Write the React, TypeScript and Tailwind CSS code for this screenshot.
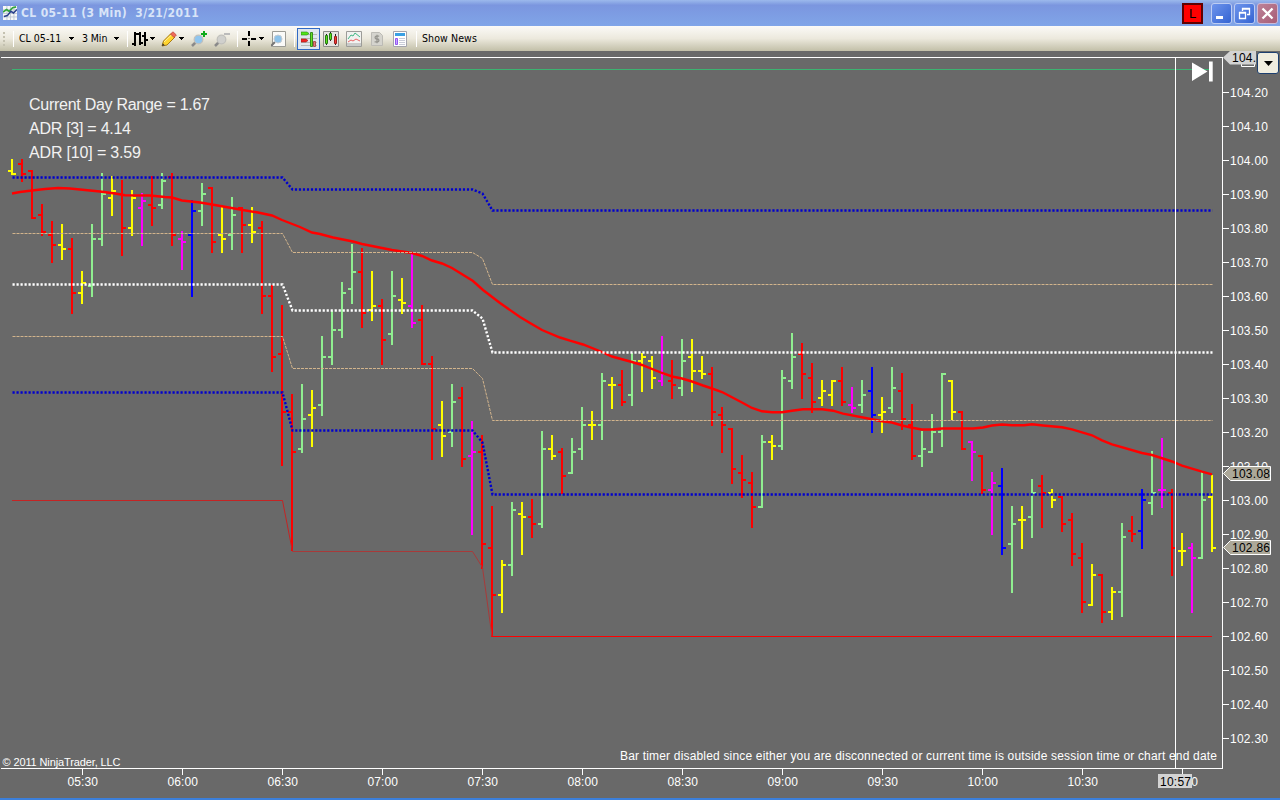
import type { ReactNode } from 'react';
import clsx from 'clsx';

// [kind, high, low, open, close] - values are y positions on the price panel
type Bar = [string, number, number, number, number];

const COLORS: Record<string, string> = {
  R: '#ff0000',
  G: '#90ee90',
  Y: '#ffff00',
  M: '#ff00ff',
  B: '#0000ff',
};

const bars: Bar[] = [
  ['Y', 159, 175, 171, 174],
  ['R', 159, 182, 164, 174],
  ['R', 170, 219, 171, 218],
  ['R', 204, 236, 215, 232],
  ['R', 221, 263, 235, 245],
  ['Y', 224, 260, 245, 249],
  ['R', 238, 314, 249, 293],
  ['Y', 271, 304, 293, 283],
  ['G', 224, 297, 286, 239],
  ['G', 173, 246, 239, 194],
  ['Y', 176, 216, 198, 191],
  ['R', 180, 256, 194, 228],
  ['Y', 190, 236, 228, 198],
  ['M', 193, 246, 208, 201],
  ['R', 176, 226, 205, 208],
  ['G', 173, 209, 205, 181],
  ['R', 173, 246, 177, 235],
  ['M', 231, 270, 239, 242],
  ['B', 200, 297, 235, 211],
  ['G', 183, 226, 211, 194],
  ['R', 187, 253, 188, 242],
  ['Y', 207, 253, 235, 239],
  ['G', 197, 250, 235, 215],
  ['R', 207, 253, 208, 225],
  ['Y', 207, 243, 225, 232],
  ['R', 221, 314, 228, 296],
  ['R', 285, 372, 296, 357],
  ['R', 305, 466, 354, 412],
  ['R', 394, 551, 412, 452],
  ['G', 384, 453, 449, 419],
  ['Y', 390, 447, 415, 408],
  ['G', 336, 416, 405, 357],
  ['G', 311, 365, 357, 330],
  ['G', 282, 338, 330, 293],
  ['G', 244, 304, 289, 272],
  ['R', 248, 328, 272, 313],
  ['Y', 271, 321, 310, 306],
  ['R', 299, 365, 306, 340],
  ['G', 271, 345, 334, 296],
  ['Y', 278, 314, 300, 303],
  ['M', 253, 328, 306, 323],
  ['R', 305, 365, 320, 364],
  ['R', 356, 460, 364, 429],
  ['Y', 401, 457, 425, 436],
  ['G', 384, 447, 432, 402],
  ['R', 387, 467, 398, 459],
  ['M', 421, 535, 456, 452],
  ['R', 435, 569, 452, 544],
  ['R', 506, 637, 548, 595],
  ['Y', 560, 613, 595, 565],
  ['G', 502, 576, 565, 510],
  ['Y', 502, 555, 514, 517],
  ['R', 499, 538, 517, 524],
  ['G', 431, 528, 524, 449],
  ['Y', 435, 460, 449, 456],
  ['R', 448, 494, 452, 476],
  ['G', 438, 474, 473, 452],
  ['G', 407, 460, 449, 425],
  ['Y', 411, 440, 425, 425],
  ['G', 373, 440, 425, 381],
  ['Y', 377, 409, 385, 385],
  ['R', 370, 406, 385, 402],
  ['G', 353, 406, 395, 361],
  ['Y', 353, 392, 361, 357],
  ['Y', 356, 389, 361, 378],
  ['M', 336, 386, 381, 374],
  ['R', 360, 399, 381, 385],
  ['G', 339, 396, 388, 361],
  ['Y', 339, 392, 357, 371],
  ['Y', 356, 379, 371, 374],
  ['R', 367, 426, 374, 412],
  ['R', 407, 453, 415, 425],
  ['R', 428, 484, 429, 469],
  ['R', 455, 498, 473, 480],
  ['R', 472, 528, 483, 507],
  ['G', 435, 508, 507, 442],
  ['Y', 435, 460, 442, 446],
  ['G', 370, 450, 446, 378],
  ['G', 333, 389, 381, 357],
  ['R', 343, 399, 354, 374],
  ['R', 363, 413, 378, 402],
  ['Y', 380, 406, 398, 391],
  ['Y', 380, 406, 395, 381],
  ['R', 367, 406, 381, 402],
  ['M', 387, 413, 405, 408],
  ['G', 380, 413, 405, 395],
  ['B', 367, 433, 391, 415],
  ['Y', 397, 433, 415, 412],
  ['G', 367, 413, 408, 388],
  ['R', 373, 430, 391, 419],
  ['R', 404, 460, 425, 456],
  ['G', 431, 467, 456, 449],
  ['G', 414, 453, 452, 432],
  ['G', 373, 447, 432, 374],
  ['Y', 380, 420, 381, 412],
  ['R', 411, 450, 412, 449],
  ['M', 441, 481, 442, 452],
  ['R', 455, 494, 456, 490],
  ['M', 472, 535, 490, 483],
  ['B', 468, 555, 486, 548],
  ['G', 506, 593, 544, 524],
  ['Y', 506, 549, 520, 520],
  ['G', 479, 538, 517, 493],
  ['R', 475, 528, 486, 493],
  ['Y', 489, 508, 493, 500],
  ['R', 496, 532, 497, 524],
  ['R', 513, 566, 520, 554],
  ['R', 543, 613, 558, 602],
  ['Y', 564, 606, 605, 575],
  ['R', 574, 623, 575, 612],
  ['Y', 587, 620, 612, 592],
  ['G', 523, 617, 592, 537],
  ['R', 516, 542, 531, 534],
  ['B', 489, 549, 531, 500],
  ['G', 451, 515, 503, 493],
  ['M', 438, 508, 490, 490],
  ['R', 489, 576, 493, 548],
  ['Y', 533, 566, 551, 551],
  ['M', 543, 613, 548, 558],
  ['G', 472, 559, 558, 500],
  ['Y', 475, 552, 497, 548],
];

const movingAverage =
  '12,193.5 20,192 32,190.5 45,189 58,188 70,188.5 85,190 100,191.5 115,193.5 125,195.3 150,195.5 165,197 172,197.5 182,200.5 200,202.5 212,204.5 240,209.5 258,212.5 272,215.5 282,220 300,227 312,232.5 320,234 333,237.5 353,241.5 362,244 392,250 412,253 422,256 432,260.5 442,263.5 452,268 473,281 483,290 500,303 520,317 530,323 542,330 560,337.5 570,340.7 583,344.5 602,352 612,356.5 632,362 642,365 662,373 672,376.5 682,378.5 692,381.5 703,385.5 712,388.5 722,392 742,402.5 752,408 762,411.3 772,412.3 782,412.3 792,410.7 803,409.3 822,409.3 833,410.7 843,413.7 872,419.3 882,421.3 892,422.5 902,425.5 912,427.7 922,429.5 932,429.5 942,428.5 973,428.5 983,427.5 992,425.5 1002,424.5 1012,425.3 1024,425.3 1032,424.3 1043,425.5 1062,427.3 1072,429.3 1092,435.3 1102,440.3 1112,444.3 1142,453 1152,455 1172,461.5 1182,465.7 1202,471.7 1212,474.3';

// each level steps down at 06:30 and again around 07:30
const level = (a: number, b: number, c: number, d: number) =>
  `12.5,${a} 282.5,${a} 292.5,${b} 472.5,${b} 482.5,${c} 492.5,${d} 1212.5,${d}`;

const times = ['05:30', '06:00', '06:30', '07:00', '07:30', '08:00', '08:30', '09:00', '09:30', '10:00', '10:30', '11:00'];
const prices = Array.from({ length: 20 }, (_, i) => (104.2 - i * 0.1).toFixed(2));

const PriceTag = ({ y, value }: { y: number; value: string }) => (
  <g>
    <polygon
      points={`1223.5,${y} 1230.5,${y - 7} 1270.5,${y - 7} 1270.5,${y + 7} 1230.5,${y + 7}`}
      fill="#aca899"
      stroke="#fff"
    />
    <text x="1232" y={y + 4.5} textLength="38" fill="#000">
      {value}
    </text>
  </g>
);

const Chart = () => (
  <svg
    className="block h-[747px] w-full bg-[#696969] font-['Liberation_Sans',Arial,sans-serif] text-[12px]"
    viewBox="0 51 1280 747"
    fill="#fff"
  >
    <path d="M12 69.5H1212" stroke="#3cb371" shapeRendering="crispEdges" />

    {bars.map(([kind, high, low, open, close], i) => {
      const x = 12 + i * 10;
      return (
        <g key={i} fill={COLORS[kind]} shapeRendering="crispEdges">
          <rect x={x - 1} y={high} width="2" height={low - high} />
          <rect x={x - 4} y={open - 1} width="3" height="2" />
          <rect x={x + 1} y={close - 1} width="3" height="2" />
        </g>
      );
    })}

    {/* moving average and day range levels */}
    <g fill="none">
      <polyline points={movingAverage} stroke="#ff0000" strokeWidth="2.4" />
      <polyline points={level(233.5, 252.5, 258.5, 284.5)} stroke="#d2b48c" strokeDasharray="3 1" />
      <polyline points={level(336.5, 368.5, 378.5, 420.5)} stroke="#d2b48c" strokeDasharray="3 1" />
      <polyline points={level(177.5, 189.5, 193.5, 210.5)} stroke="#0000cd" strokeWidth="2.4" strokeDasharray="2.2 1.8" />
      <polyline points={level(392.5, 430.5, 442.5, 494.5)} stroke="#0000cd" strokeWidth="2.4" strokeDasharray="2.2 1.8" />
      <polyline points={level(284.5, 310.5, 318.5, 352.5)} stroke="#ffffff" strokeWidth="2.4" strokeDasharray="2.2 1.8" />
      <polyline points="12,500.5 282.5,500.5 292.5,551.5" stroke="#c42424" />
      <polyline points="292.5,551.5 472.5,551.5 482.5,567.5 492,636.5" stroke="#a83a3a" />
      <path d="M492 636.5H1212" stroke="#f00" />
    </g>

    {/* axes and crosshair */}
    <g stroke="#fff" shapeRendering="crispEdges">
      <path d="M1 57.5H1223M1222.5 57V768M1 768.5H1223M1175.5 57V768" fill="none" />
      {prices.map((p, i) => (
        <path key={p} d={`M1223 ${92.5 + i * 34}h6`} />
      ))}
      {times.map((t, i) => (
        <path key={t} d={`M${82.5 + i * 100} 769v6`} />
      ))}
    </g>

    {prices.map((p, i) => (
      <text key={p} x="1230" y={97 + i * 34} textLength="38">
        {p}
      </text>
    ))}
    {times.map((t, i) => (
      <text key={t} x={67.5 + i * 100} y="786" textLength="30.5">
        {t}
      </text>
    ))}

    <PriceTag y={473.5} value="103.08" />
    <PriceTag y={547.5} value="102.86" />

    {/* crosshair markers */}
    <path d="M1241.5 64V66.5H1254.5V64" fill="none" stroke="#fff" />
    <polygon points="1223,57.5 1230,51 1256,51 1256,64.5 1230,64.5" fill="#d3d3d3" />
    <text x="1232" y="62" textLength="24" fill="#000">
      104.
    </text>
    <rect x="1158" y="774" width="34" height="14" fill="#d3d3d3" />
    <text x="1160" y="786" textLength="31" fill="#000">
      10:57
    </text>

    <path d="M1192 62.5L1207.5 71.5L1192 81ZM1209 61.5h3.7v20h-3.7z" />

    <g fontSize="16" fill="#f2f2f2">
      <text x="29" y="110" textLength="181">
        Current Day Range = 1.67
      </text>
      <text x="29" y="134" textLength="102">
        ADR [3] = 4.14
      </text>
      <text x="29" y="158" textLength="112">
        ADR [10] = 3.59
      </text>
    </g>
    <text x="620" y="760" textLength="597">
      Bar timer disabled since either you are disconnected or current time is outside session time or chart end date
    </text>
    <text x="2.5" y="766" fontSize="11" textLength="118">
      © 2011 NinjaTrader, LLC
    </text>
  </svg>
);

const Caret = ({ className }: { className?: string }) => (
  <svg className={clsx('h-[3px] w-[5px] shrink-0', className)} viewBox="0 0 5 3" shapeRendering="crispEdges">
    <path d="M0 0h5v1H0zM1 1h3v1H1zM2 2h1v1H2z" />
  </svg>
);

const Separator = ({ className }: { className?: string }) => (
  <div className={clsx('h-4 w-px shrink-0 border-l border-white', className)} />
);

const Icon = ({ className, children }: { className?: string; children: ReactNode }) => (
  <svg className={clsx('size-4 shrink-0', className)} viewBox="0 0 16 16" fill="none">
    {children}
  </svg>
);

const Lens = ({ color }: { color: string }) => (
  <>
    <path d="M1 15l4-4" stroke="#8a8a8a" strokeWidth="2.5" />
    <circle cx="7.5" cy="8.5" r="4.3" fill={color} stroke="#c0c0bc" strokeWidth="1.3" />
  </>
);

const Toolbar = () => (
  <div className="flex h-[25px] items-center bg-linear-to-b from-[#fbfaf7] via-[#ece9dd] to-[#c2bfa8] font-['DejaVu_Sans_Condensed','DejaVu_Sans',sans-serif] text-[10.5px] whitespace-nowrap text-black">
    <div className="ml-[3px] flex w-[3px] flex-col gap-[2px]">
      {[0, 1, 2, 3].map((i) => (
        <span key={i} className="size-[2px] bg-[#c4c1b0]" />
      ))}
    </div>
    <Separator className="ml-[7px]" />
    <span className="ml-[5px] w-[50px] tracking-[0px]">CL 05-11</span>
    <Caret />
    <span className="ml-[8px] w-[32px] tracking-[-0.1px]">3 Min</span>
    <Caret />
    <Separator className="ml-[8px]" />
    <Icon className="ml-[4px]">
      <path
        d="M3 1v14M0 13h3M3 3h3M8 1v13M5 3h3M8 12h3M13 1v14M10 5h3M13 9h3"
        stroke="#000"
        strokeWidth="2"
        shapeRendering="crispEdges"
      />
    </Icon>
    <Caret className="ml-[2px]" />
    <Icon className="ml-[6px]">
      <path d="M1 15l1.5-5L10 2.5l4 3.5-8 8z" fill="#ffd52e" stroke="#a87b16" />
      <path d="M3 11l8-7.5" stroke="#fff3a0" />
      <path d="M9.5 3L12 .8l3.4 3.2L13 6.5z" fill="#ef6b5c" stroke="#b94437" strokeWidth=".7" />
      <path d="M1 15l.8-2.8 2 2z" fill="#333" />
    </Icon>
    <Caret className="ml-[2px]" />
    <Icon className="ml-[7px]">
      <Lens color="#8fc5ee" />
      <path d="M13 0v6M10 3h6" stroke="#0faa1c" strokeWidth="2" />
    </Icon>
    <Icon className="ml-[7px]">
      <Lens color="#d0d0cd" />
      <path d="M10 3h6" stroke="#bbb" strokeWidth="2" />
    </Icon>
    <Separator className="ml-[7px]" />
    <Icon className="ml-[4px]">
      <path d="M7 0v5M7 10v5M0 7.5h5M9 7.5h5" stroke="#000" strokeWidth="2" shapeRendering="crispEdges" />
      <path d="M6.5 7h1v1h-1z" fill="#000" />
    </Icon>
    <Caret className="ml-[1px]" />
    <Icon className="ml-[7px]">
      <path d="M1.5.5h13v15h-13z" fill="#fafaf8" stroke="#9c9c96" />
      <path d="M0 15l4-4" stroke="#777" strokeWidth="2" />
      <circle cx="7" cy="8" r="4" fill="#8cc2ea" stroke="#c4ccd2" />
    </Icon>
    <Separator className="ml-[7px]" />
    <div className="ml-[2px] flex h-[22px] w-[23px] items-center justify-center border border-[#316ac5] bg-[#dfe6ee]">
      <Icon>
        <path d="M0 3.5h16M0 7.5h16M0 11.5h16M0 14.5h16" stroke="#b5b8b8" />
        <path d="M0 1h6l2 1.5L6 4H0z" fill="#53e31b" stroke="#268a10" strokeWidth=".6" />
        <path d="M0 8h5l2 1.5L5 11H0z" fill="#ef2525" stroke="#9b1919" strokeWidth=".6" />
        <path d="M9.5 1.5h2v14h-2z" fill="#65df26" stroke="#358d1a" />
        <path d="M12.5 10.5h2v5h-2z" fill="#e37a7a" stroke="#a85151" />
      </Icon>
    </div>
    <Icon className="ml-[3px]">
      <path d="M.5.5h15v15H.5z" fill="#e5e4e0" stroke="#8c8c88" />
      <path d="M3.5 3v11M7.5 1v9M12.5 3v11" stroke="#222" />
      <path d="M2.5 4.5h2v8h-2zM6.5 2.5h2v6h-2z" fill="#5ae01c" stroke="#267c10" />
      <path d="M11.5 5.5h2v7h-2z" fill="#f13b35" stroke="#9d1c1c" />
    </Icon>
    <Icon className="ml-[7px]">
      <path d="M.5.5h15v15H.5z" fill="#f1f2f0" stroke="#9c9c98" />
      <path d="M1 12h14v3H1z" fill="#c9cbc9" />
      <path d="M2 8l3-4 2 1 2-3 5 4" stroke="#40b784" />
      <path d="M2 11l3-2 2 1 3-2 4 2" stroke="#ea6464" />
    </Icon>
    <Icon className="ml-[7px]">
      <path d="M2.5 1.5h8l3 3v10h-11z" fill="#d5d4ce" stroke="#bcbbb5" />
      <path d="M10.2 5.2H7.5a1.4 1.4 0 0 0 0 2.8h1a1.4 1.4 0 0 1 0 2.8H5.6M8 3.8v8.4" stroke="#96958f" strokeWidth="1.3" />
    </Icon>
    <Icon className="ml-[7px]">
      <path d="M1.5.5h13v15h-13z" fill="#fff" stroke="#a4a4ad" />
      <path d="M3 2h10v3H3z" fill="#3aa0e3" />
      <path d="M3.5 7.5h2v6h-2z" fill="#c6a2ff" stroke="#9258ef" />
      <path d="M7 7.5h6M7 9.5h6M7 11.5h6M7 13.5h6" stroke="#c9ccd8" />
    </Icon>
    <Separator className="ml-[8px]" />
    <span className="ml-[5px] tracking-[0.1px]">Show News</span>
  </div>
);

const WindowButton = ({ className, children }: { className: string; children: ReactNode }) => (
  <div className={clsx('flex size-[21px] items-center justify-center rounded-[3px] border', className)}>
    <svg className="size-[19px]" viewBox="0 0 19 19" fill="none" stroke="#fff">
      {children}
    </svg>
  </div>
);

const TitleBar = () => (
  <div className="flex h-[26px] items-center bg-linear-to-b from-[#9cb9ec] via-[#7b96df] via-20% to-[#80a5e8]">
    <Icon className="ml-[3px] size-[14px]">
      <path d="M0 0h16v16H0z" fill="#f5f7f8" />
      <path d="M0 4.5h16M0 8.5h16M0 12.5h16M4.5 0v16M8.5 0v16M12.5 0v16" stroke="#bac4d0" />
      <path d="M0 7l4-3 3 2 4-4 4-1" stroke="#35a53e" strokeWidth="2" />
      <path d="M1 12l4-1 4-5 3 2 4-4" stroke="#29408c" strokeWidth="1.8" />
    </Icon>
    <span className="ml-1 w-[190px] font-['DejaVu_Sans_Condensed','DejaVu_Sans',sans-serif] text-[12px] font-bold tracking-[0.37px] whitespace-pre text-[#d8e4f8]">
      CL 05-11 (3 Min)  3/21/2011
    </span>
    <div className="mr-[2px] ml-auto flex items-center">
      <div className="mr-[8px] flex size-[21px] items-center justify-center border-2 border-[#600000] bg-[#ff0000] font-['Liberation_Sans',sans-serif] text-[13px] leading-none text-black">
        L
      </div>
      <WindowButton className="mr-[2px] border-[#bdcdf3] bg-linear-to-br from-[#6e94ec] to-[#3463d2]">
        <path d="M4 13.5h7" strokeWidth="3" />
      </WindowButton>
      <WindowButton className="mr-[2px] border-[#bdcdf3] bg-linear-to-br from-[#6e94ec] to-[#3463d2]">
        <path d="M7.5 7V4.5h7v6H12M7 5h8" strokeWidth="1.3" />
        <path d="M4.5 8.5h6v6h-6zM4 9h7" strokeWidth="1.3" />
      </WindowButton>
      <WindowButton className="border-[#cbb9d6] bg-linear-to-br from-[#bd8298] to-[#a75d76]">
        <path d="M4.5 4.5l10 10M14.5 4.5l-10 10" strokeWidth="2.3" />
      </WindowButton>
    </div>
  </div>
);

export default function App() {
  return (
    <div className="relative flex h-[800px] w-[1280px] flex-col overflow-hidden bg-[#696969]">
      <TitleBar />
      <Toolbar />
      <Chart />
      <div className="h-[2px] bg-[#3b7fdb]" />
      <button className="absolute top-[52px] right-[1px] flex h-[22px] w-[22px] items-center justify-center rounded-[3px] border border-[#1c3f70] bg-[#f0eddf]">
        <svg className="h-[5px] w-[9px]" viewBox="0 0 9 5">
          <path d="M0 0h9L4.5 5z" />
        </svg>
      </button>
    </div>
  );
}
